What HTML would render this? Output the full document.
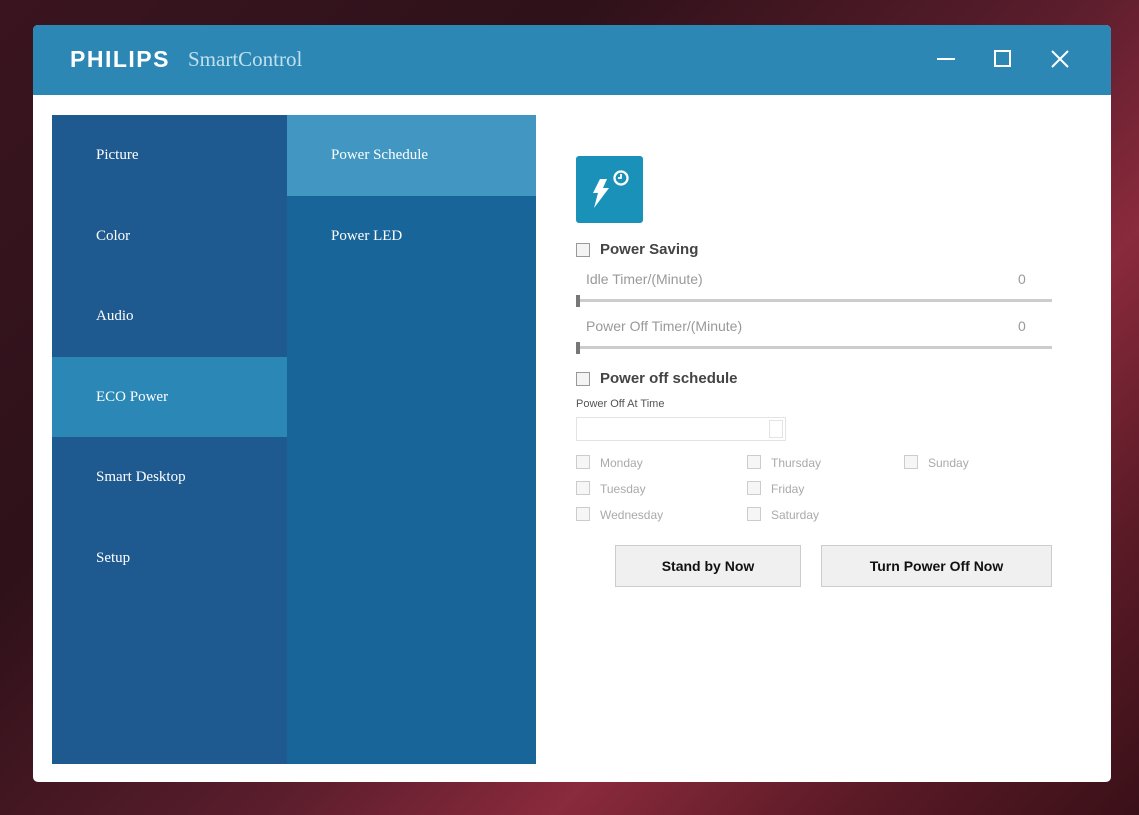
<!DOCTYPE html>
<html><head><style>
*{margin:0;padding:0;box-sizing:border-box}
body{width:1139px;height:815px;overflow:hidden;background:linear-gradient(135deg,#3a1520 0%,#2e1119 30%,#5a1d2c 55%,#8a2a3c 70%,#5a1a26 85%,#3a1018 100%);font-family:"Liberation Sans",sans-serif;position:relative}
.win{position:absolute;left:33px;top:25px;width:1078px;height:757px;background:#fff;border-radius:5px;overflow:hidden}
.title{height:70px;background:#2d87b5;position:relative}
.logo{position:absolute;left:37px;top:21px;color:#fff;font-weight:bold;font-size:23px;letter-spacing:1.5px}
.app{position:absolute;left:155px;top:22px;color:#bfe0ef;font-family:"Liberation Serif",serif;font-size:21px}
.ctl{position:absolute;top:20px;color:#fff}
.nav1{position:absolute;left:19px;top:90px;width:235px;height:649px;background:#1e5a8f}
.nav2{position:absolute;left:254px;top:90px;width:249px;height:649px;background:#18659a}
.it{height:80.6px;line-height:80px;padding-left:44px;color:#fff;font-family:"Liberation Serif",serif;font-size:15px}
.sel1{background:#2a87b6}.sel2{background:#4197c2}
.c{position:absolute;color:#444;font-size:15px}
.cb{position:absolute;width:14px;height:14px;border:1px solid #999;background:#f4f4f4}
.cbl{position:absolute;width:14px;height:14px;border:1px solid #ccc;background:#f6f6f6}
.g{position:absolute;color:#999;font-size:14px}
.d{position:absolute;color:#aaa;font-size:12px}
.sl{position:absolute;left:543px;width:476px;height:3px;background:#ccc}
.th{position:absolute;width:4px;height:12px;background:#777}
.btn{position:absolute;top:520px;height:42px;background:#f0f0f0;border:1px solid #ccc;font-weight:bold;font-size:14px;text-align:center;line-height:40px;color:#111}
</style></head><body>
<div class="win">
<div class="title"><div class="logo">PHILIPS</div><div class="app">SmartControl</div>
<div class="ctl" style="left:904px;top:33px;width:18px;height:2px;background:#fff"></div>
<div class="ctl" style="left:961px;top:25px;width:17px;height:17px;border:2px solid #fff"></div>
<svg class="ctl" style="left:1017px;top:24px" width="20" height="20"><path d="M2 2L18 18M18 2L2 18" stroke="#fff" stroke-width="2"/></svg>
</div>
<div class="nav1"><div class="it">Picture</div><div class="it">Color</div><div class="it">Audio</div><div class="it sel1">ECO Power</div><div class="it">Smart Desktop</div><div class="it">Setup</div></div>
<div class="nav2"><div class="it sel2">Power Schedule</div><div class="it">Power LED</div></div>
<div style="position:absolute;left:543px;top:131px;width:67px;height:67px;background:#1a91b9;border-radius:3px">
<svg width="67" height="67"><path d="M24 23L31 23L27 32L33 32L18 52L22 37L17 37Z" fill="#fff"/><circle cx="45" cy="22" r="6.5" fill="none" stroke="#fff" stroke-width="2.3"/><path d="M45 18V22H42" stroke="#fff" stroke-width="1.8" fill="none"/></svg></div>
<div class="cb" style="left:543px;top:218px"></div><div class="c" style="left:567px;top:216px;font-weight:bold;color:#444">Power Saving</div>
<div class="g" style="left:553px;top:246px">Idle Timer/(Minute)</div><div class="g" style="left:985px;top:246px">0</div>
<div class="sl" style="top:274px"></div><div class="th" style="left:543px;top:270px"></div>
<div class="g" style="left:553px;top:293px">Power Off Timer/(Minute)</div><div class="g" style="left:985px;top:293px">0</div>
<div class="sl" style="top:321px"></div><div class="th" style="left:543px;top:317px"></div>
<div class="cb" style="left:543px;top:347px"></div><div class="c" style="left:567px;top:345px;font-weight:bold">Power off schedule</div>
<div style="position:absolute;left:543px;top:373px;font-size:11px;color:#555">Power Off At Time</div>
<div style="position:absolute;left:543px;top:392px;width:210px;height:24px;border:1px solid #e3e3e3"><div style="position:absolute;right:2px;top:2px;width:14px;height:18px;border:1px solid #e3e3e3"></div></div>
<div class="cbl" style="left:543px;top:430px"></div><div class="d" style="left:567px;top:431px">Monday</div>
<div class="cbl" style="left:543px;top:456px"></div><div class="d" style="left:567px;top:457px">Tuesday</div>
<div class="cbl" style="left:543px;top:482px"></div><div class="d" style="left:567px;top:483px">Wednesday</div>
<div class="cbl" style="left:714px;top:430px"></div><div class="d" style="left:738px;top:431px">Thursday</div>
<div class="cbl" style="left:714px;top:456px"></div><div class="d" style="left:738px;top:457px">Friday</div>
<div class="cbl" style="left:714px;top:482px"></div><div class="d" style="left:738px;top:483px">Saturday</div>
<div class="cbl" style="left:871px;top:430px"></div><div class="d" style="left:895px;top:431px">Sunday</div>
<div class="btn" style="left:582px;width:186px">Stand by Now</div>
<div class="btn" style="left:788px;width:231px">Turn Power Off Now</div>
</div>
</body></html>
